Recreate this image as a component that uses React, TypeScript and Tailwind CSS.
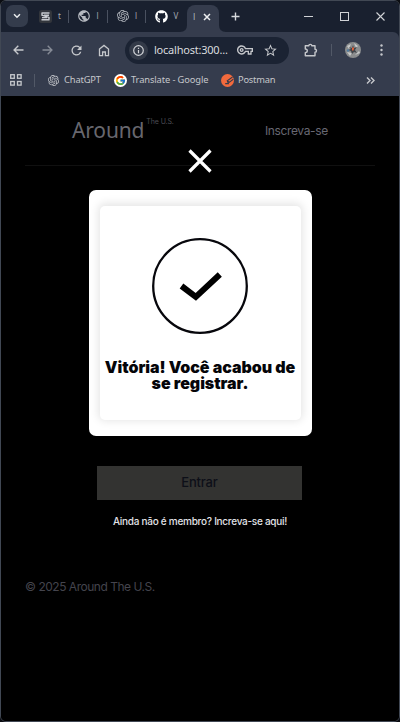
import React from "react";
import { FaGithub } from "react-icons/fa";
import { FcGoogle } from "react-icons/fc";
import { SiOpenai } from "react-icons/si";
import { MdOutlineVpnKey, MdPublic, MdStarBorder, MdRefresh } from "react-icons/md";

function Tab({ children, letter, last = false }: { children: React.ReactNode; letter: string; last?: boolean }) {
  return (
    <div className="flex h-[22px] w-[38.5px] shrink-0 items-center">
      <div className="flex w-[13px] items-center justify-center text-[#b4b8bf]">{children}</div>
      <span className="ml-[6px] w-[5px] text-[8px] leading-[14px] text-[#a5a9b1]">{letter}</span>
      {!last && <span className="ml-[5px] h-[13px] w-px bg-[#4a5160]" />}
    </div>
  );
}

function TabStrip() {
  return (
    <div className="flex h-[31px] shrink-0 bg-[#19202f] pl-[5px]">
      <button className="mt-[4px] flex h-[22px] w-[22px] shrink-0 items-center justify-center rounded-[7px] bg-[#343c4c]">
        <svg width="8" height="6" viewBox="0 0 8 6" fill="none" stroke="#e6e8eb" strokeWidth="1.5">
          <path d="M1 1.2 4 4.2 7 1.2" />
        </svg>
      </button>
      <div className="mt-[4px] ml-[11px] flex w-[148px] shrink-0">
        <Tab letter="t">
          <svg width="13" height="13" viewBox="0 0 13 13">
            <rect width="13" height="13" rx="2.5" fill="#33363c" />
            <path d="M2.5 3H10.5M2.5 9.8H10.5M3 3V5.2L10 7.4V9.8M3 7.6H8M5 5.2H10" stroke="#c9cbcf" strokeWidth="1.4" fill="none" />
          </svg>
        </Tab>
        <Tab letter="l"><MdPublic size={14} className="shrink-0" /></Tab>
        <Tab letter="l"><SiOpenai size={12} /></Tab>
        <Tab letter="V" last><FaGithub size={13} className="shrink-0 text-white" /></Tab>
      </div>
      <div className="relative mt-[4px] flex h-[27px] w-[32px] shrink-0 items-center rounded-t-[8px] bg-[#353c4d] pb-[4px] pl-[6px]">
        <svg className="absolute bottom-0 -left-[7px]" width="7" height="7" viewBox="0 0 7 7"><path d="M7 0V7H0Q7 7 7 0" fill="#353c4d" /></svg>
        <svg className="absolute -right-[7px] bottom-0" width="7" height="7" viewBox="0 0 7 7"><path d="M0 0V7H7Q0 7 0 0" fill="#353c4d" /></svg>
        <span className="w-[9px] text-[9px] leading-[14px] text-[#aeb2ba]">l</span>
        <svg className="ml-[1px]" width="8" height="8" viewBox="0 0 8 8" stroke="#eceef0" strokeWidth="1.5"><path d="M1 1 7 7M7 1 1 7" /></svg>
      </div>
      <svg className="mt-[11px] ml-[12px] shrink-0" width="9" height="9" viewBox="0 0 9 9" stroke="#d5d8dc" strokeWidth="1.4"><path d="M4.5 .5V8.5M.5 4.5H8.5" /></svg>
      <div className="mt-[11px] ml-auto flex h-[9px] items-center gap-[27px] pr-[14px] text-[#d0d2d6]">
        <svg width="9" height="9" viewBox="0 0 9 9" stroke="currentColor"><path d="M0 4.5H9" /></svg>
        <svg width="9" height="9" viewBox="0 0 9 9" stroke="currentColor" fill="none"><rect x=".5" y=".5" width="8" height="8" /></svg>
        <svg width="9" height="9" viewBox="0 0 9 9" stroke="currentColor" strokeWidth="1.1"><path d="M.5 .5 8.5 8.5M8.5 .5 .5 8.5" /></svg>
      </div>
    </div>
  );
}

function AddressBar() {
  return (
    <div className="bg-[#19202f]">
      <div className="flex h-[36px] shrink-0 items-center rounded-tr-[6px] bg-[#353c4d] pl-[12px] text-[#c5c7cb]">
        <svg width="11" height="10" viewBox="0 0 11 10" fill="none" stroke="currentColor" strokeWidth="1.4"><path d="M10.5 5H1.2M5.3 .8 1.1 5 5.3 9.2" /></svg>
        <svg className="ml-[18px]" width="11" height="10" viewBox="0 0 11 10" fill="none" stroke="#858a95" strokeWidth="1.4"><path d="M.5 5H9.8M5.7 .8 9.9 5 5.7 9.2" /></svg>
        <MdRefresh size={15} className="ml-[16px]" />
        <svg className="ml-[14px]" width="12" height="13" viewBox="0 0 12 13" fill="none" stroke="currentColor" strokeWidth="1.3"><path d="M1.5 5 6 1.4 10.5 5V11.7H7.4V8H4.6V11.7H1.5Z" /></svg>
        <div className="ml-[15px] flex h-[27px] w-[164px] shrink-0 items-center rounded-full bg-[#1b2333] pl-[4px]">
          <div className="flex h-[19px] w-[19px] shrink-0 items-center justify-center rounded-full bg-[#333a48]">
            <svg width="11" height="11" viewBox="0 0 11 11" fill="none" stroke="#d0d2d6" strokeWidth="1.2"><circle cx="5.5" cy="5.5" r="4.8" /><path d="M5.5 5V8.2M5.5 2.7V4" /></svg>
          </div>
          <span className="ml-[6px] w-[74px] whitespace-nowrap text-[11px] leading-[16px] tracking-[-0.22px] text-[#d9dbdf]">localhost:300...</span>
          <MdOutlineVpnKey size={16} className="ml-[9px] shrink-0" />
          <MdStarBorder size={15} className="ml-[10px] shrink-0" />
        </div>
        <svg className="ml-[15px] shrink-0" width="14" height="14" viewBox="0 0 14 14" fill="none" stroke="currentColor" strokeWidth="1.4" strokeLinejoin="round"><path d="M1.3 2.8H4.8Q4.8 1.4 6.3 1.4T7.8 2.8H11V6.3Q12.5 6.3 12.5 7.8T11 9.3V12.7H1.3V9.6Q3.3 9.6 3.3 7.8T1.3 6Z" /></svg>
        <span className="ml-[13px] h-[12px] w-px bg-[#525967]" />
        <svg className="ml-[13px] shrink-0" width="16" height="16" viewBox="0 0 16 16">
          <circle cx="8" cy="8" r="8" fill="#8b8d8e" />
          <path d="M2 4 6 2 4 7ZM9 1 13 4 11 6ZM2 10 5 14 7 11ZM10 13 14 9 15 11Z" fill="#c7c9c9" />
          <path d="M4 5 7 6 8 3 9 6 12 5 10 8 12 11 9 10 7 12 6 9 3 8 6 7Z" fill="#41454a" />
          <path d="M7 5.5H9.2L8.5 8.5H7Z" fill="#e0603a" />
          <circle cx="3" cy="8.5" r="1.2" fill="#507ba0" />
        </svg>
        <svg className="ml-[19px]" width="3" height="12" viewBox="0 0 3 12" fill="currentColor"><circle cx="1.5" cy="1.5" r="1.2" /><circle cx="1.5" cy="6" r="1.2" /><circle cx="1.5" cy="10.5" r="1.2" /></svg>
      </div>
    </div>
  );
}

function Bookmarks() {
  return (
    <div className="flex h-[28px] shrink-0 items-center bg-[#353c4d] pb-[4px] pl-[9px] text-[9.3px] text-[#c5c7cb]">
      <svg width="12" height="12" viewBox="0 0 12 12" fill="none" stroke="currentColor" strokeWidth="1.3"><rect x=".7" y=".7" width="3.6" height="3.6" /><rect x="7.5" y=".7" width="3.6" height="3.6" /><rect x=".7" y="7.5" width="3.6" height="3.6" /><rect x="7.5" y="7.5" width="3.6" height="3.6" /></svg>
      <span className="ml-[12px] h-[13px] w-px bg-[#525967]" />
      <SiOpenai size={11} className="ml-[13px] shrink-0" />
      <span className="ml-[5px] w-[37px] whitespace-nowrap tracking-[-0.12px]">ChatGPT</span>
      <span className="ml-[13px] flex h-[13px] w-[13px] shrink-0 items-center justify-center rounded-full bg-white"><FcGoogle size={11} /></span>
      <span className="ml-[4px] w-[78px] whitespace-nowrap tracking-[-0.1px]">Translate - Google</span>
      <svg className="ml-[12px] shrink-0" width="13" height="13" viewBox="0 0 13 13" fill="none">
        <circle cx="6.5" cy="6.5" r="6.5" fill="#f26a3d" />
        <path d="M11.5 3 6.3 6.7 8.2 8.4 12.3 5.3M6.3 6.7 7.4 9.6H4.2" stroke="#353c4d" strokeWidth="1.1" />
      </svg>
      <span className="ml-[4px] whitespace-nowrap tracking-[-0.22px]">Postman</span>
      <svg className="mr-[24px] ml-auto" width="9" height="7" viewBox="0 0 9 7" fill="none" stroke="currentColor" strokeWidth="1.4"><path d="M1 .5 4 3.5 1 6.5M5 .5 8 3.5 5 6.5" /></svg>
    </div>
  );
}

function SuccessModal() {
  return (
    <div className="absolute inset-x-0 top-[53px] flex flex-col items-center">
      <svg width="24" height="24" viewBox="0 0 24 24" stroke="#fff" strokeWidth="3.2"><path d="M1.5 1.5 22.5 22.5M22.5 1.5 1.5 22.5" /></svg>
      <div className="mt-[17px] h-[246px] w-[223px] rounded-[7px] bg-white px-[11px] pt-[16px]">
        <div className="flex h-[214px] w-[201px] flex-col items-center rounded-[5px] bg-white pt-[32px] shadow-[0_-1px_8px_2px_rgba(0,0,0,0.1)]">
          <svg width="96" height="96" viewBox="0 0 96 96" fill="none" stroke="#07070c">
            <circle cx="48" cy="48" r="46.8" strokeWidth="2.3" />
            <path d="M29.5 48 43.8 58.9 67.8 36.5" stroke="#000" strokeWidth="6" />
          </svg>
          <p className="mt-[25px] text-center font-[Inter,sans-serif] text-[16px] leading-[16px] font-black tracking-[-0.04px] whitespace-nowrap text-[#050509]">
            Vitória! Você acabou de<br />se registrar.
          </p>
        </div>
      </div>
    </div>
  );
}

export default function App() {
  return (
    <div className="h-[722px] w-[400px] overflow-hidden bg-[#0b0d12]">
      <div className="flex h-full flex-col overflow-hidden rounded-[6px] border border-[#414854] bg-black font-['Noto_Sans',sans-serif]">
        <TabStrip />
        <AddressBar />
        <Bookmarks />
        <main className="relative flex flex-1 flex-col bg-black font-[Inter,sans-serif]">
          <header className="mx-[24px] flex h-[70px] items-start border-b border-[#101010]">
            <div className="ml-[47px] flex w-[104px] items-start pt-[20px] text-[#67676e]">
              <span className="font-['Noto_Sans',sans-serif] text-[21px] leading-[28px] tracking-[-0.15px]">Around</span>
              <span className="mt-[1px] ml-[2px] text-[7px] leading-[9px] tracking-[-0.1px] whitespace-nowrap text-[#4b4b54]">The U.S.</span>
            </div>
            <span className="mt-[26px] ml-[89px] text-[12px] leading-[18px] tracking-[-0.37px] whitespace-nowrap text-[#686873]">Inscreva-se</span>
          </header>
          <button className="mt-[300px] ml-[96px] h-[34px] w-[205px] bg-[#333331] text-[13px] font-medium tracking-[-0.2px] text-[#0d0f18]">Entrar</button>
          <p className="mt-[13px] text-center text-[10px] leading-[16px] font-medium tracking-[-0.27px] text-[#e2e3e8]">Ainda não é membro? Increva-se aqui!</p>
          <footer className="mt-[49px] ml-[24px] text-[12px] leading-[18px] tracking-[-0.48px] text-[#44444d]">© 2025 Around The U.S.</footer>
          <SuccessModal />
        </main>
      </div>
    </div>
  );
}
